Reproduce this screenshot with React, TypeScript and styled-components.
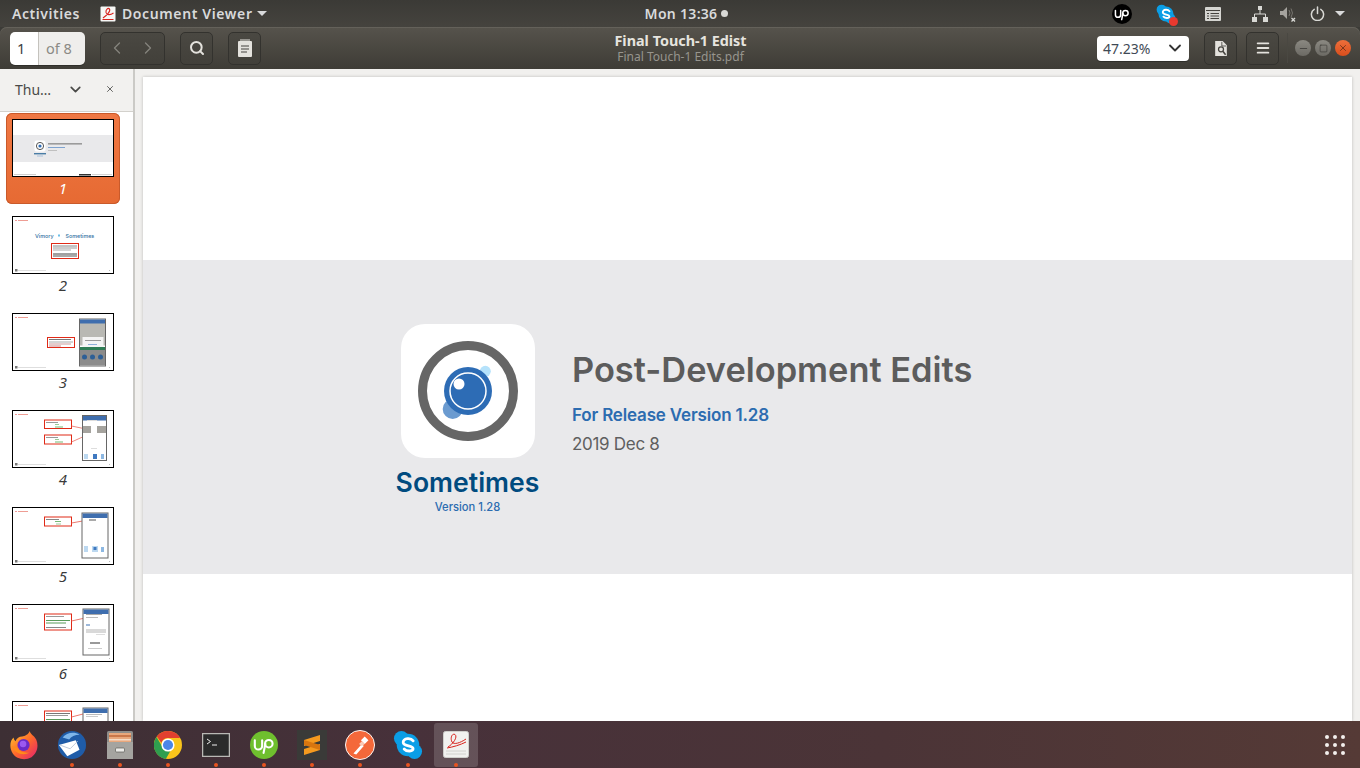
import styled, { createGlobalStyle } from "styled-components";
import { ChevronDown, ChevronLeft, ChevronRight, Menu, Minus, Search, Square, X } from "lucide-react";

const GlobalStyle = createGlobalStyle`
  html, body {
    margin: 0;
    padding: 0;
    background: #3c3b37;
  }
  * {
    box-sizing: border-box;
  }
`;

const uiFont = `"Noto Sans", "Open Sans", sans-serif`;
const docFont = `"Inter", "Noto Sans", sans-serif`;

const Screen = styled.div`
  width: 1360px;
  height: 768px;
  display: flex;
  flex-direction: column;
  overflow: hidden;
  font-family: ${uiFont};
  background: #3c3b37;
`;

const TopBar = styled.div`
  height: 27px;
  flex: none;
  display: grid;
  grid-template-columns: 1fr auto 1fr;
  align-items: center;
  background: linear-gradient(#3b3a36, #45433e);
  color: #d9dadb;
  font-size: 14px;
  font-weight: 600;
`;

const TopLeft = styled.div`
  display: flex;
  align-items: center;
  padding-left: 12px;
`;

const Activities = styled.span`
  letter-spacing: 0.55px;
  margin-right: 20px;
`;

const AppName = styled.span`
  letter-spacing: 0.62px;
  margin: 0 4px 0 6px;
`;

const Caret = styled.span`
  display: inline-block;
  flex: none;
  width: 0;
  height: 0;
  border-left: 5px solid transparent;
  border-right: 5px solid transparent;
  border-top: 5px solid #d9dadb;
`;

const Clock = styled.div`
  display: flex;
  align-items: center;
  gap: 4px;
  padding-left: 13px;
  letter-spacing: 0.3px;
`;

const ClockDot = styled.span`
  width: 7px;
  height: 7px;
  border-radius: 50%;
  background: #d9d9d6;
`;

const Tray = styled.div`
  display: flex;
  align-items: center;
  justify-content: flex-end;
  padding-right: 18px;
`;

const TraySlot = styled.div<{ $w: number }>`
  width: ${(p) => p.$w}px;
  height: 27px;
  display: flex;
  align-items: center;
  justify-content: center;
`;

const SkypeWrap = styled.span`
  position: relative;
  display: flex;
`;

const SkypeAlert = styled.span`
  position: absolute;
  right: -2px;
  bottom: -2px;
  width: 9px;
  height: 9px;
  border-radius: 50%;
  background: #e8392f;
`;

const HeaderBar = styled.header`
  height: 42px;
  flex: none;
  display: grid;
  grid-template-columns: 1fr auto 1fr;
  align-items: center;
  padding: 0 9px 0 10px;
  border-radius: 7px 7px 0 0;
  background: linear-gradient(#56534c, #3e3c36);
  box-shadow: inset 0 1px 0 #64615a;
`;

const HeaderLeft = styled.div`
  display: flex;
  align-items: center;
`;

const HeaderRight = styled.div`
  display: flex;
  align-items: center;
  justify-content: flex-end;
`;

const PageEntry = styled.div`
  width: 75px;
  height: 33px;
  display: flex;
  border-radius: 5px;
  overflow: hidden;
  margin-right: 15px;
  font-size: 14.5px;
  box-shadow: 0 1px 0 #2f2e2a;
`;

const PageNumber = styled.div`
  width: 29px;
  background: #fff;
  color: #3c3c3c;
  border-right: 1px solid #c4c2bd;
  padding-left: 7px;
  line-height: 33px;
`;

const PageTotal = styled.div`
  flex: 1;
  background: #efeeec;
  color: #8b8a85;
  padding-left: 7px;
  line-height: 33px;
`;

const ToolButton = styled.div<{ $w?: number; $mr?: number }>`
  width: ${(p) => p.$w ?? 33}px;
  height: 33px;
  margin-right: ${(p) => p.$mr ?? 15}px;
  display: flex;
  align-items: center;
  justify-content: center;
  border: 1px solid #33322e;
  border-radius: 5px;
  color: #e4e2dd;
  background: linear-gradient(#4a4842, #42403a);
`;

const NavGroup = styled(ToolButton)`
  justify-content: space-around;
  color: #85837d;
`;

const TitleBlock = styled.div`
  padding-top: 2px;
  text-align: center;
  line-height: 16px;
`;

const DocTitle = styled.div`
  color: #e6e4df;
  font-size: 14.4px;
  font-weight: 700;
`;

const DocSubtitle = styled.div`
  color: #97958e;
  font-size: 12px;
`;

const ZoomBox = styled.div`
  width: 92px;
  height: 25px;
  margin-right: 15px;
  display: flex;
  align-items: center;
  justify-content: space-between;
  padding: 0 4px 0 6px;
  background: #fff;
  border-radius: 4px;
  color: #3f4a55;
  font-size: 14px;
  box-shadow: 0 1px 0 #2f2e2a;
`;

const Separator = styled.div`
  width: 1px;
  height: 30px;
  background: #4a4842;
  margin: 0 3px 0 8px;
`;

const WindowButton = styled.div<{ $close?: boolean }>`
  width: 16px;
  height: 16px;
  margin-left: 4px;
  display: flex;
  align-items: center;
  justify-content: center;
  border-radius: 50%;
  color: ${(p) => (p.$close ? "#4a2413" : "#33322e")};
  background: ${(p) => (p.$close ? "linear-gradient(#ee6f3b, #d94e1c)" : "linear-gradient(#8b8982, #6c6a64)")};
`;

const Main = styled.div`
  flex: 1;
  min-height: 0;
  display: flex;
  overflow: hidden;
`;

const Sidebar = styled.aside`
  width: 133px;
  flex: none;
  display: flex;
  flex-direction: column;
  background: #fff;
`;

const SidebarHead = styled.div`
  height: 43px;
  flex: none;
  display: flex;
  align-items: center;
  padding: 0 15px 2px;
  background: #f2f1ef;
  border-bottom: 1px solid #d3d1cc;
  color: #4a4a48;
  font-size: 14px;
`;

const HeadLabel = styled.span`
  width: 52px;
`;

const HeadClose = styled.span`
  margin-left: 21px;
  display: flex;
`;

const ThumbList = styled.div`
  padding-top: 1px;
`;

const ThumbItem = styled.div`
  height: 97px;
  padding: 0 13px 0 6px;
`;

const ThumbCard = styled.div<{ $selected?: boolean }>`
  height: 91px;
  padding: 6px 6px 0;
  border-radius: 6px;
  background: ${(p) => (p.$selected ? "linear-gradient(#f07843, #e66a33)" : "transparent")};
  box-shadow: ${(p) => (p.$selected ? "0 0 0 1px #c95a2b inset" : "none")};
`;

const ThumbFrame = styled.div`
  width: 102px;
  height: 58px;
  border: 1px solid #000;
  background: #fff;
  overflow: hidden;

  svg {
    display: block;
  }
`;

const ThumbNumber = styled.div<{ $selected?: boolean }>`
  margin-top: 1px;
  text-align: center;
  font-size: 15px;
  font-style: italic;
  line-height: 20px;
  color: ${(p) => (p.$selected ? "#fff" : "#3a3a3a")};
`;

const Gutter = styled.div`
  width: 2px;
  flex: none;
  background: #cbcac6;
`;

const Viewer = styled.main`
  flex: 1;
  padding: 8px 8px 0;
  background: #f1f0ee;
  overflow: hidden;
`;

const PageSheet = styled.div`
  height: 100%;
  padding-top: 183px;
  background: #fff;
  box-shadow: 0 0 3px rgba(0, 0, 0, 0.22);
  font-family: ${docFont};
`;

const Band = styled.section`
  height: 314px;
  display: flex;
  padding: 64px 0 0 253px;
  background: #e9e9eb;
`;

const LogoColumn = styled.div`
  width: 143px;
  display: flex;
  flex-direction: column;
  align-items: center;
  margin-right: 33px;
`;

const LogoTile = styled.div`
  width: 134px;
  height: 134px;
  border-radius: 24px;
  background: #fff;

  svg {
    display: block;
  }
`;

const BrandName = styled.div`
  margin-top: 6px;
  color: #004b7f;
  font-size: 26.6px;
  font-weight: 600;
  line-height: 36px;
  white-space: nowrap;
`;

const BrandVersion = styled.div`
  color: #2c6cb0;
  font-size: 11.2px;
  font-weight: 500;
  line-height: 15px;
`;

const DocHeading = styled.div`
  padding-top: 21px;
`;

const Headline = styled.h1`
  margin: 0;
  color: #5c5c5c;
  font-size: 34.4px;
  font-weight: 600;
  line-height: 50px;
`;

const Release = styled.div`
  margin-top: 7px;
  color: #2c6cb0;
  font-size: 17px;
  font-weight: 600;
  letter-spacing: -0.17px;
  line-height: 26px;
`;

const DocDate = styled.div`
  margin-top: 3px;
  color: #5f5f5f;
  font-size: 17px;
  letter-spacing: -0.3px;
  line-height: 26px;
`;

const Dock = styled.nav`
  height: 47px;
  flex: none;
  display: flex;
  align-items: center;
  background: linear-gradient(90deg, #3d2f34, #47313a 30%, #4b3437 65%, #553a36);
`;

const DockItem = styled.div<{ $active?: boolean }>`
  position: relative;
  width: 44px;
  height: 44px;
  margin: 0 2px;
  display: flex;
  align-items: center;
  justify-content: center;
  border-radius: 3px;
  background: ${(p) => (p.$active ? "rgba(255, 255, 255, 0.16)" : "transparent")};
`;

const RunningDot = styled.span`
  position: absolute;
  left: 20px;
  bottom: 0;
  width: 4px;
  height: 4px;
  border-radius: 50%;
  background: #e95420;
`;

const AppGrid = styled.div`
  margin-left: auto;
  margin-right: 15px;
  display: grid;
  grid-template-columns: repeat(3, 4px);
  gap: 4px;
`;

const GridDot = styled.span`
  width: 4px;
  height: 4px;
  border-radius: 50%;
  background: #f3efec;
`;

const Grey = ({ x, y, w, c = "#9a9a9a", h = 1 }: { x: number; y: number; w: number; c?: string; h?: number }) => (
  <rect x={x} y={y} width={w} height={h} fill={c} />
);

const RedBox = ({ x, y, w, h }: { x: number; y: number; w: number; h: number }) => (
  <rect x={x} y={y} width={w} height={h} fill="none" stroke="#e02a17" strokeWidth="1" />
);

const SlideChrome = () => (
  <>
    <rect x="2.5" y="3" width="1" height="1" fill="#d33" />
    <Grey x={5} y={3} w={10} c="#ee9d94" />
    <rect x="2" y="52" width="2.5" height="2.5" fill="#777" />
    <Grey x={5} y={53} w={28} c="#dedede" />
    <Grey x={96} y={53} w={1} c="#bbb" />
  </>
);

const Phone = ({ x, y, w, h, children }: { x: number; y: number; w: number; h: number; children?: React.ReactNode }) => (
  <g>
    <rect x={x} y={y} width={w} height={h} fill="#fff" stroke="#666" strokeWidth="1" />
    <rect x={x + 0.5} y={y + 0.5} width={w - 1} height={4.5} fill="#3f6eae" />
    {children}
  </g>
);

const ThumbSvg = ({ children }: { children: React.ReactNode }) => (
  <svg width="100" height="56" viewBox="0 0 100 56">
    {children}
  </svg>
);

const Thumb1 = () => (
  <ThumbSvg>
    <rect x="0" y="15" width="100" height="27" fill="#e9e9eb" />
    <rect x="21.5" y="20.5" width="11" height="11" rx="2" fill="#fff" />
    <circle cx="27" cy="26" r="3.6" fill="none" stroke="#555" strokeWidth="1" />
    <circle cx="27" cy="26" r="1.6" fill="#2d6cb5" />
    <Grey x={21} y={33} w={12} h={1.4} c="#4a7da6" />
    <Grey x={24} y={35.5} w={6} c="#a9c2dc" />
    <Grey x={35} y={23} w={34} h={1.6} c="#9b9b9b" />
    <Grey x={35} y={27} w={17} c="#7ea3cf" />
    <Grey x={35} y={30} w={9} c="#c0c0c0" />
    <Grey x={1} y={54} w={22} c="#cfcfcf" />
    <Grey x={66} y={54} w={12} h={1.5} c="#333" />
    <Grey x={79} y={54} w={20} c="#d4d4d4" />
  </ThumbSvg>
);

const Thumb2 = () => (
  <ThumbSvg>
    <SlideChrome />
    <text x="22" y="20.5" fontSize="5.4" fontFamily="Inter, sans-serif" fontWeight="500" fill="#2f6f9f">
      Vimory
    </text>
    <rect x="45" y="17.5" width="2" height="2" fill="#6cc0ea" />
    <text x="52.5" y="20.5" fontSize="5.4" fontFamily="Inter, sans-serif" fontWeight="500" fill="#2f6f9f">
      Sometimes
    </text>
    <RedBox x={38.5} y={26.5} w={27} h={15} />
    <Grey x={40} y={28.5} w={24} c="#888" />
    <Grey x={40} y={30.5} w={24} c="#999" />
    <Grey x={40} y={32.5} w={18} c="#aaa" />
    <Grey x={40} y={36.5} w={24} c="#444" />
    <Grey x={40} y={38.5} w={24} c="#555" />
  </ThumbSvg>
);

const Thumb3 = () => (
  <ThumbSvg>
    <SlideChrome />
    <RedBox x={34.5} y={23.5} w={27} h={10} />
    <Grey x={36} y={25} w={22} c="#777" />
    <Grey x={36} y={27.5} w={24} c="#aaa" />
    <Grey x={36} y={29.5} w={22} c="#c99" />
    <Grey x={36} y={31.5} w={12} c="#c88" />
    <Phone x={66.5} y={5} w={26} h={47}>
      <rect x="67" y="9.5" width="25" height="22" fill="#b9b9b4" />
      <rect x="69.5" y="23" width="21" height="10" fill="#f4f4f4" />
      <Grey x={72} y={26} w={16} c="#999" />
      <Grey x={75} y={30} w={9} c="#8fb0da" />
      <rect x="67" y="33" width="25" height="3" fill="#2f7d55" />
      <rect x="67" y="36" width="25" height="15.5" fill="#8b8b8b" />
      <circle cx="71.5" cy="43" r="2.5" fill="#2d5f96" />
      <circle cx="79.5" cy="43" r="2.5" fill="#2d5f96" />
      <circle cx="87.5" cy="43" r="2.5" fill="#2d5f96" />
    </Phone>
  </ThumbSvg>
);

const Thumb4 = () => (
  <ThumbSvg>
    <SlideChrome />
    <RedBox x={31.5} y={9} w={27} h={8.5} />
    <RedBox x={31.5} y={24} w={27} h={9} />
    <Grey x={33} y={11} w={12} c="#999" />
    <Grey x={42} y={13} w={4} c="#9c9" />
    <Grey x={42} y={15.5} w={8} c="#7b7" />
    <Grey x={33} y={26} w={12} c="#999" />
    <Grey x={42} y={28} w={4} c="#9c9" />
    <Grey x={42} y={30.5} w={8} c="#7b7" />
    <line x1="58.5" y1="15" x2="73" y2="18" stroke="#ea6a5e" strokeWidth="0.8" />
    <line x1="58.5" y1="31" x2="85" y2="19" stroke="#ea6a5e" strokeWidth="0.8" />
    <Phone x={69.5} y={4.5} w={24} h={45}>
      <rect x="70" y="15" width="8" height="7" fill="#a5a39e" />
      <rect x="84" y="15" width="9" height="7" fill="#a5a39e" />
      <Grey x={74} y={9} w={10} c="#ddd" />
      <Grey x={78} y={37} w={6} c="#ddd" />
      <rect x="71" y="43" width="4" height="5" fill="#bcd8f0" />
      <rect x="80" y="43" width="4" height="5" fill="#3f79c0" />
      <rect x="88" y="43" width="3" height="5" fill="#8db8e2" />
    </Phone>
  </ThumbSvg>
);

const Thumb5 = () => (
  <ThumbSvg>
    <SlideChrome />
    <RedBox x={31.5} y={9} w={27} h={9} />
    <Grey x={33} y={11} w={13} c="#888" />
    <Grey x={42} y={13} w={6} c="#7b7" />
    <Grey x={43} y={15.5} w={5} c="#9c9" />
    <line x1="58.5" y1="15" x2="78" y2="11.5" stroke="#ea6a5e" strokeWidth="0.9" />
    <Phone x={69} y={5} w={26} h={45}>
      <Grey x={76} y={11} w={7} h={2} c="#aaa" />
      <rect x="71" y="38" width="4" height="6" fill="#bcd8f0" />
      <rect x="79" y="38" width="6" height="6" fill="#bcd8f0" />
      <rect x="80.5" y="39" width="3" height="3" fill="#3f79c0" />
      <rect x="88" y="39" width="3" height="5" fill="#8db8e2" />
    </Phone>
  </ThumbSvg>
);

const Thumb6 = () => (
  <ThumbSvg>
    <SlideChrome />
    <RedBox x={31.5} y={9} w={27} h={16} />
    <Grey x={33} y={11} w={18} c="#999" />
    <Grey x={33} y={15} w={24} c="#5a9b5a" />
    <Grey x={33} y={17.5} w={20} c="#5a9b5a" />
    <Grey x={33} y={22} w={20} c="#888" />
    <line x1="58.5" y1="16" x2="72" y2="13" stroke="#ea6a5e" strokeWidth="0.9" />
    <Phone x={70} y={4} w={26} h={46}>
      <Grey x={73} y={9} w={16} c="#aaa" />
      <Grey x={73} y={12} w={12} c="#bbb" />
      <Grey x={73} y={19} w={4} h={2} c="#9db8da" />
      <rect x="73" y="24" width="20" height="4" fill="#d9d9d9" />
      <Grey x={83} y={29} w={9} c="#ddd" />
      <Grey x={77} y={37} w={10} h={2} c="#999" />
      <Grey x={75} y={43} w={14} c="#ccc" />
    </Phone>
  </ThumbSvg>
);

const Thumb7 = () => (
  <ThumbSvg>
    <SlideChrome />
    <RedBox x={31.5} y={9} w={27} h={30} />
    <Grey x={33} y={11} w={24} c="#777" />
    <Grey x={33} y={13} w={22} c="#999" />
    <Grey x={33} y={17} w={24} c="#5a9b5a" />
    <Grey x={33} y={19} w={22} c="#5a9b5a" />
    <line x1="58.5" y1="15" x2="70" y2="12" stroke="#ea6a5e" strokeWidth="0.9" />
    <Phone x={70} y={6} w={25} h={44}>
      <Grey x={73} y={12} w={16} c="#bbb" />
      <Grey x={73} y={14} w={12} c="#ccc" />
    </Phone>
  </ThumbSvg>
);

const thumbs = [Thumb1, Thumb2, Thumb3, Thumb4, Thumb5, Thumb6, Thumb7];

const EvinceIcon = ({ size }: { size: number }) => (
  <svg width={size} height={size} viewBox="0 0 32 32">
    <rect x="1" y="1" width="30" height="30" rx="2" fill="#f7f7f5" />
    <path d="M6 24C13 19 22 10 19 6 16 3 11 7 12 13c1 5 8 6 15 1M5 27h22" fill="none" stroke="#d8221c" strokeWidth="2.2" />
  </svg>
);

const UpworkBadge = ({ size, bg, fg }: { size: number; bg: string; fg: string }) => (
  <svg width={size} height={size} viewBox="0 0 32 32">
    <circle cx="16" cy="16" r="16" fill={bg} />
    <path
      d="M5.500 10.500v6.500a4.200 4.200 0 0 0 8.400 0v-6.500M15.500 25l2-10"
      fill="none"
      stroke={fg}
      strokeWidth="2.4"
      strokeLinecap="round"
    />
    <circle cx="21.500" cy="14.500" r="4.300" fill="none" stroke={fg} strokeWidth="2.400" />
  </svg>
);

const SkypeIcon = ({ size }: { size: number }) => (
  <svg width={size} height={size} viewBox="0 0 32 32">
    <circle cx="9" cy="9" r="8" fill="#0b9ee6" />
    <circle cx="23" cy="23" r="8" fill="#0b9ee6" />
    <circle cx="16" cy="16" r="12" fill="#0b9ee6" />
    <path
      d="M21.500 11.500C20 9.500 17.500 9 15.500 9.200c-3 .3-5 2-4.600 4.300.5 4.500 10.500 2.500 10.500 6.500 0 2.800-6.500 3.500-9.500.2"
      fill="none"
      stroke="#fff"
      strokeWidth="3"
      strokeLinecap="round"
    />
  </svg>
);

const FirefoxIcon = () => (
  <svg width="30" height="30" viewBox="0 0 32 32">
    <defs>
      <linearGradient id="ffx" x1="0" y1="0" x2="1" y2="1">
        <stop offset="0" stopColor="#ffcb2e" />
        <stop offset="0.5" stopColor="#ff6a2b" />
        <stop offset="1" stopColor="#e31f6f" />
      </linearGradient>
    </defs>
    <path d="M22 1c1 4 5 5 7 9 3 7 1 15-5 19-7 4-16 2-20-4C0 19 1 11 5 8c0 2 1 3 2 4 1-3 4-5 7-5 3-1 7-2 8-6z" fill="url(#ffx)" />
    <circle cx="15.500" cy="16" r="6.500" fill="#6a2bc7" />
    <circle cx="15" cy="15" r="3.500" fill="#9b59f0" />
    <path d="M3 17c3 8 12 11 19 7-5 1-11-1-13-5-2-1-4-1-6-2z" fill="#ff8a1c" />
  </svg>
);

const ThunderbirdIcon = () => (
  <svg width="30" height="30" viewBox="0 0 32 32">
    <circle cx="16" cy="16" r="15" fill="#1f5ca8" />
    <path d="M6 8c4-5 12-7 18-3-5 0-9 2-11 5z" fill="#7fb6ea" />
    <path d="M2 16l18-5 4 10-13 7z" fill="#fff" />
    <path d="M3 16l11 4 8-8" fill="none" stroke="#bcc6d6" strokeWidth="1" />
  </svg>
);

const FilesIcon = () => (
  <svg width="26" height="30" viewBox="0 0 26 30">
    <rect x="0" y="1" width="26" height="28" rx="1.500" fill="#8e8d8a" />
    <rect x="2" y="3" width="22" height="9" fill="#e8a77c" />
    <rect x="2" y="5" width="22" height="2" fill="#c9774a" />
    <rect x="2" y="9" width="22" height="1.500" fill="#f5dcc8" />
    <rect x="0" y="12" width="26" height="17" fill="#a5a4a0" />
    <rect x="8.500" y="18" width="9" height="4" rx="1" fill="#ecebe8" stroke="#5c5b58" strokeWidth="0.700" />
  </svg>
);

const ChromeIcon = () => (
  <svg width="28" height="28" viewBox="0 0 32 32">
    <circle cx="16" cy="16" r="16" fill="#f9c41b" />
    <path d="M16 0a16 16 0 0 1 13.900 8H16a8 8 0 0 0-7.600 5.500L3.200 6.300A16 16 0 0 1 16 0z" fill="#e1402f" />
    <path d="M2.900 6.800l7.400 12.500a8 8 0 0 0 8.400 3.500L13.500 32A16 16 0 0 1 2.900 6.800z" fill="#2f9e4f" />
    <circle cx="16" cy="16" r="7.500" fill="#fff" />
    <circle cx="16" cy="16" r="5.800" fill="#4a86e8" />
  </svg>
);

const TerminalIcon = () => (
  <svg width="28" height="24" viewBox="0 0 28 24">
    <rect x="0.500" y="0.500" width="27" height="23" fill="#2b2b2b" stroke="#b9b9b5" strokeWidth="1.500" />
    <path d="M5 6l3.500 2.500L5 11" fill="none" stroke="#eee" strokeWidth="1" />
    <path d="M10 12h5" stroke="#eee" strokeWidth="1" />
  </svg>
);

const SublimeIcon = () => (
  <svg width="30" height="30" viewBox="0 0 30 30">
    <rect width="30" height="30" fill="#3a3a38" />
    <path d="M23 5v6L7 16v-6zM23 14v6L7 25v-6z" fill="#f59a1f" />
    <path d="M7 10l16 5v5L7 15z" fill="#d9760f" />
  </svg>
);

const PostmanIcon = () => (
  <svg width="30" height="30" viewBox="0 0 32 32">
    <circle cx="16" cy="16" r="15.500" fill="#f4683a" stroke="#fff" strokeWidth="1" />
    <path d="M9 25l9-10 2 2-8 9zM17 11l4-4 4 4-4 4z" fill="#fff" />
    <path d="M15 15l3-3 3 3-3 2z" fill="#f9cbb8" />
  </svg>
);

const SheetIcon = () => (
  <svg width="26" height="28" viewBox="0 0 26 28">
    <rect x="0.500" y="0.500" width="25" height="26" rx="2" fill="#f1f1ef" stroke="#cfcfcb" />
    <path d="M5 16C10 13 15 6 12 3.500 9 2 7 7 9 11c2 3 8 1 14-3M4 17c6-1 13-3 19-6" fill="none" stroke="#d8221c" strokeWidth="1" />
    <path d="M3 20h20M3 23h20" stroke="#d2d2ce" strokeWidth="1" />
  </svg>
);

const dockIcons = [
  <FirefoxIcon />,
  <ThunderbirdIcon />,
  <FilesIcon />,
  <ChromeIcon />,
  <TerminalIcon />,
  <UpworkBadge size={28} bg="#6fbf2e" fg="#fff" />,
  <SublimeIcon />,
  <PostmanIcon />,
  <SkypeIcon size={30} />,
  <SheetIcon />,
];

const App = () => (
  <>
    <GlobalStyle />
    <Screen>
      <TopBar>
        <TopLeft>
          <Activities>Activities</Activities>
          <EvinceIcon size={16} />
          <AppName>Document Viewer</AppName>
          <Caret />
        </TopLeft>
        <Clock>
          Mon 13:36
          <ClockDot />
        </Clock>
        <Tray>
          <TraySlot $w={48}>
            <UpworkBadge size={20} bg="#000" fg="#fff" />
          </TraySlot>
          <TraySlot $w={40}>
            <SkypeWrap>
              <SkypeIcon size={20} />
              <SkypeAlert />
            </SkypeWrap>
          </TraySlot>
          <TraySlot $w={54}>
            <svg width="16" height="14" viewBox="0 0 16 14">
              <rect width="16" height="14" rx="1" fill="#d5d5d1" />
              <path d="M1 3.500h14" stroke="#45433e" />
              <path d="M2 6.500h2M5.500 6.500H14M2 9h2M5.500 9H14M2 11.500h2M5.500 11.500H14" stroke="#45433e" />
            </svg>
          </TraySlot>
          <TraySlot $w={40}>
            <svg width="16" height="16" viewBox="0 0 16 16">
              <path d="M6 0h4v4H6zM0 11h5v5H0zM11 11h5v5h-5z" fill="#d9d9d5" />
              <path d="M8 4v4M2.500 11V8h11v3" fill="none" stroke="#d9d9d5" />
            </svg>
          </TraySlot>
          <TraySlot $w={16}>
            <svg width="16" height="16" viewBox="0 0 16 16">
              <path d="M0 5h3l4-4v12l-4-4H0z" fill="#a5a39e" />
              <path d="M9 4q2 3 0 6M11 2.500q3 4.500 0 9" fill="none" stroke="#77756f" />
              <path d="M11.500 12l3.500 3.500m0-3.500l-3.500 3.500" stroke="#d9d9d5" strokeWidth="1.300" />
            </svg>
          </TraySlot>
          <TraySlot $w={42}>
            <svg width="15" height="15" viewBox="0 0 16 16">
              <path d="M4.500 3.500a6.500 6.500 0 1 0 7 0M8 1v7" fill="none" stroke="#d9d9d5" strokeWidth="1.600" strokeLinecap="round" />
            </svg>
          </TraySlot>
          <TraySlot $w={4}>
            <Caret />
          </TraySlot>
        </Tray>
      </TopBar>

      <HeaderBar>
        <HeaderLeft>
          <PageEntry>
            <PageNumber>1</PageNumber>
            <PageTotal>of 8</PageTotal>
          </PageEntry>
          <NavGroup $w={65}>
            <ChevronLeft size={20} strokeWidth={1.6} />
            <ChevronRight size={20} strokeWidth={1.6} />
          </NavGroup>
          <ToolButton>
            <Search size={16} strokeWidth={3} />
          </ToolButton>
          <ToolButton>
            <svg width="14" height="18" viewBox="0 0 14 18">
              <path d="M1 2h12a1 1 0 0 1 1 1v14a1 1 0 0 1-1 1H1a1 1 0 0 1-1-1V3a1 1 0 0 1 1-1z" fill="#e4e2dd" />
              <path d="M3 0v4M5 0v4M7 0v4M9 0v4M11 0v4" stroke="#e4e2dd" />
              <path d="M3 7h8M3 10h8M3 13h6" stroke="#45433e" />
            </svg>
          </ToolButton>
        </HeaderLeft>
        <TitleBlock>
          <DocTitle>Final Touch-1 Edist</DocTitle>
          <DocSubtitle>Final Touch-1 Edits.pdf</DocSubtitle>
        </TitleBlock>
        <HeaderRight>
          <ZoomBox>
            47.23%
            <ChevronDown size={20} strokeWidth={2.2} color="#333" />
          </ZoomBox>
          <ToolButton $mr={9}>
            <svg width="12" height="15" viewBox="0 0 14 18">
              <path d="M0 0h9l5 5v13H0z" fill="#e4e2dd" />
              <path d="M8 1v5h5" fill="none" stroke="#45433e" />
              <circle cx="7" cy="10" r="3" fill="none" stroke="#45433e" strokeWidth="1.500" />
              <path d="M9 12l3.500 4.500" stroke="#45433e" strokeWidth="1.800" />
            </svg>
          </ToolButton>
          <ToolButton $mr={0}>
            <Menu size={16} strokeWidth={2.8} />
          </ToolButton>
          <Separator />
          <WindowButton>
            <Minus size={11} strokeWidth={1.5} />
          </WindowButton>
          <WindowButton>
            <Square size={9} strokeWidth={1.5} />
          </WindowButton>
          <WindowButton $close>
            <X size={10} strokeWidth={1.6} />
          </WindowButton>
        </HeaderRight>
      </HeaderBar>

      <Main>
        <Sidebar>
          <SidebarHead>
            <HeadLabel>Thu…</HeadLabel>
            <ChevronDown size={17} strokeWidth={2.4} />
            <HeadClose>
              <X size={10} strokeWidth={2} />
            </HeadClose>
          </SidebarHead>
          <ThumbList>
            {thumbs.map((ThumbPage, i) => (
              <ThumbItem key={i}>
                <ThumbCard $selected={i === 0}>
                  <ThumbFrame>
                    <ThumbPage />
                  </ThumbFrame>
                  {i < 6 && <ThumbNumber $selected={i === 0}>{i + 1}</ThumbNumber>}
                </ThumbCard>
              </ThumbItem>
            ))}
          </ThumbList>
        </Sidebar>
        <Gutter />
        <Viewer>
          <PageSheet>
            <Band>
              <LogoColumn>
                <LogoTile>
                  <svg width="134" height="134" viewBox="0 0 134 134">
                    <circle cx="67" cy="67" r="45.500" fill="none" stroke="#666" strokeWidth="9" />
                    <circle cx="51.700" cy="85" r="10" fill="#6b9bd0" />
                    <circle cx="84.300" cy="47.300" r="5.500" fill="#b5e2fb" />
                    <circle cx="67" cy="67" r="24" fill="#2d6cb5" />
                    <circle cx="67" cy="67" r="18" fill="none" stroke="#fff" strokeWidth="1.500" />
                    <circle cx="58" cy="60" r="5.500" fill="#fff" />
                  </svg>
                </LogoTile>
                <BrandName>Sometimes</BrandName>
                <BrandVersion>Version 1.28</BrandVersion>
              </LogoColumn>
              <DocHeading>
                <Headline>Post-Development Edits</Headline>
                <Release>For Release Version 1.28</Release>
                <DocDate>2019 Dec 8</DocDate>
              </DocHeading>
            </Band>
          </PageSheet>
        </Viewer>
      </Main>

      <Dock>
        {dockIcons.map((icon, i) => (
          <DockItem key={i} $active={i === 9}>
            {icon}
            {i > 0 && <RunningDot />}
          </DockItem>
        ))}
        <AppGrid>
          {Array.from({ length: 9 }).map((_, i) => (
            <GridDot key={i} />
          ))}
        </AppGrid>
      </Dock>
    </Screen>
  </>
);

export default App;
